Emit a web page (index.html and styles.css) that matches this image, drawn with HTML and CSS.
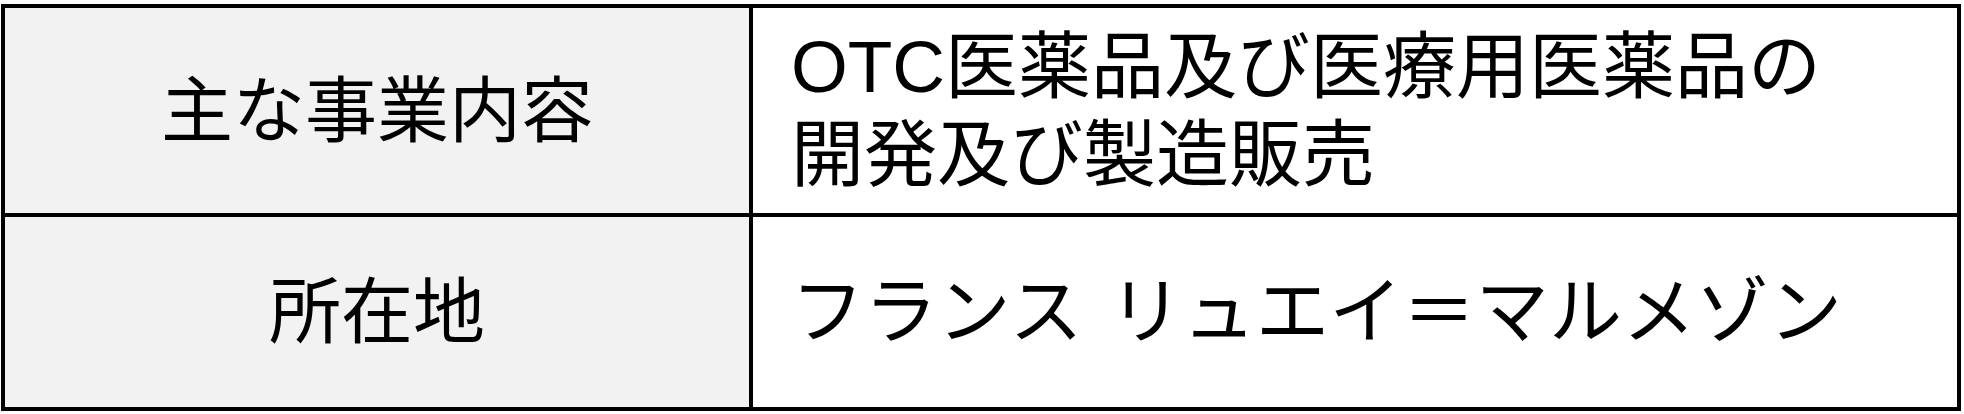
FILE: index.html
```html
<!DOCTYPE html>
<html lang="ja">
<head>
<meta charset="utf-8">
<link rel="stylesheet" href="styles.css">
</head>
<body>
<div class="info-table">
  <div class="cell head row-first">主な事業内容</div>
  <div class="cell body-cell row-first">OTC医薬品及び医療用医薬品の<br>開発及び製造販売</div>
  <div class="cell head row-second">所在地</div>
  <div class="cell body-cell row-second address">フランス リュエイ＝マルメゾン</div>
</div>
</body>
</html>
```
FILE: styles.css
```css
html, body {
  margin: 0;
  padding: 0;
  background: #ffffff;
}
body {
  font-family: "Liberation Sans", "Noto Sans CJK JP", sans-serif;
  color: #000;
}
.info-table {
  margin: 4px 0 0 1px;
  width: 1960px;
  box-sizing: border-box;
  border: 4px solid #000;
  display: grid;
  grid-template-columns: 748px 1fr;
  grid-template-rows: 209px 190px;
  font-size: 73px;
  line-height: 88px;
}
.cell {
  display: flex;
  align-items: center;
  box-sizing: border-box;
}
.head {
  background: #f2f2f2;
  border-right: 4px solid #000;
  justify-content: center;
  font-size: 72px;
}
.body-cell {
  background: #fff;
  padding-left: 38px;
}
.address {
  word-spacing: 6px;
  letter-spacing: 0.3px;
}
.row-first {
  border-bottom: 4px solid #000;
}
```
